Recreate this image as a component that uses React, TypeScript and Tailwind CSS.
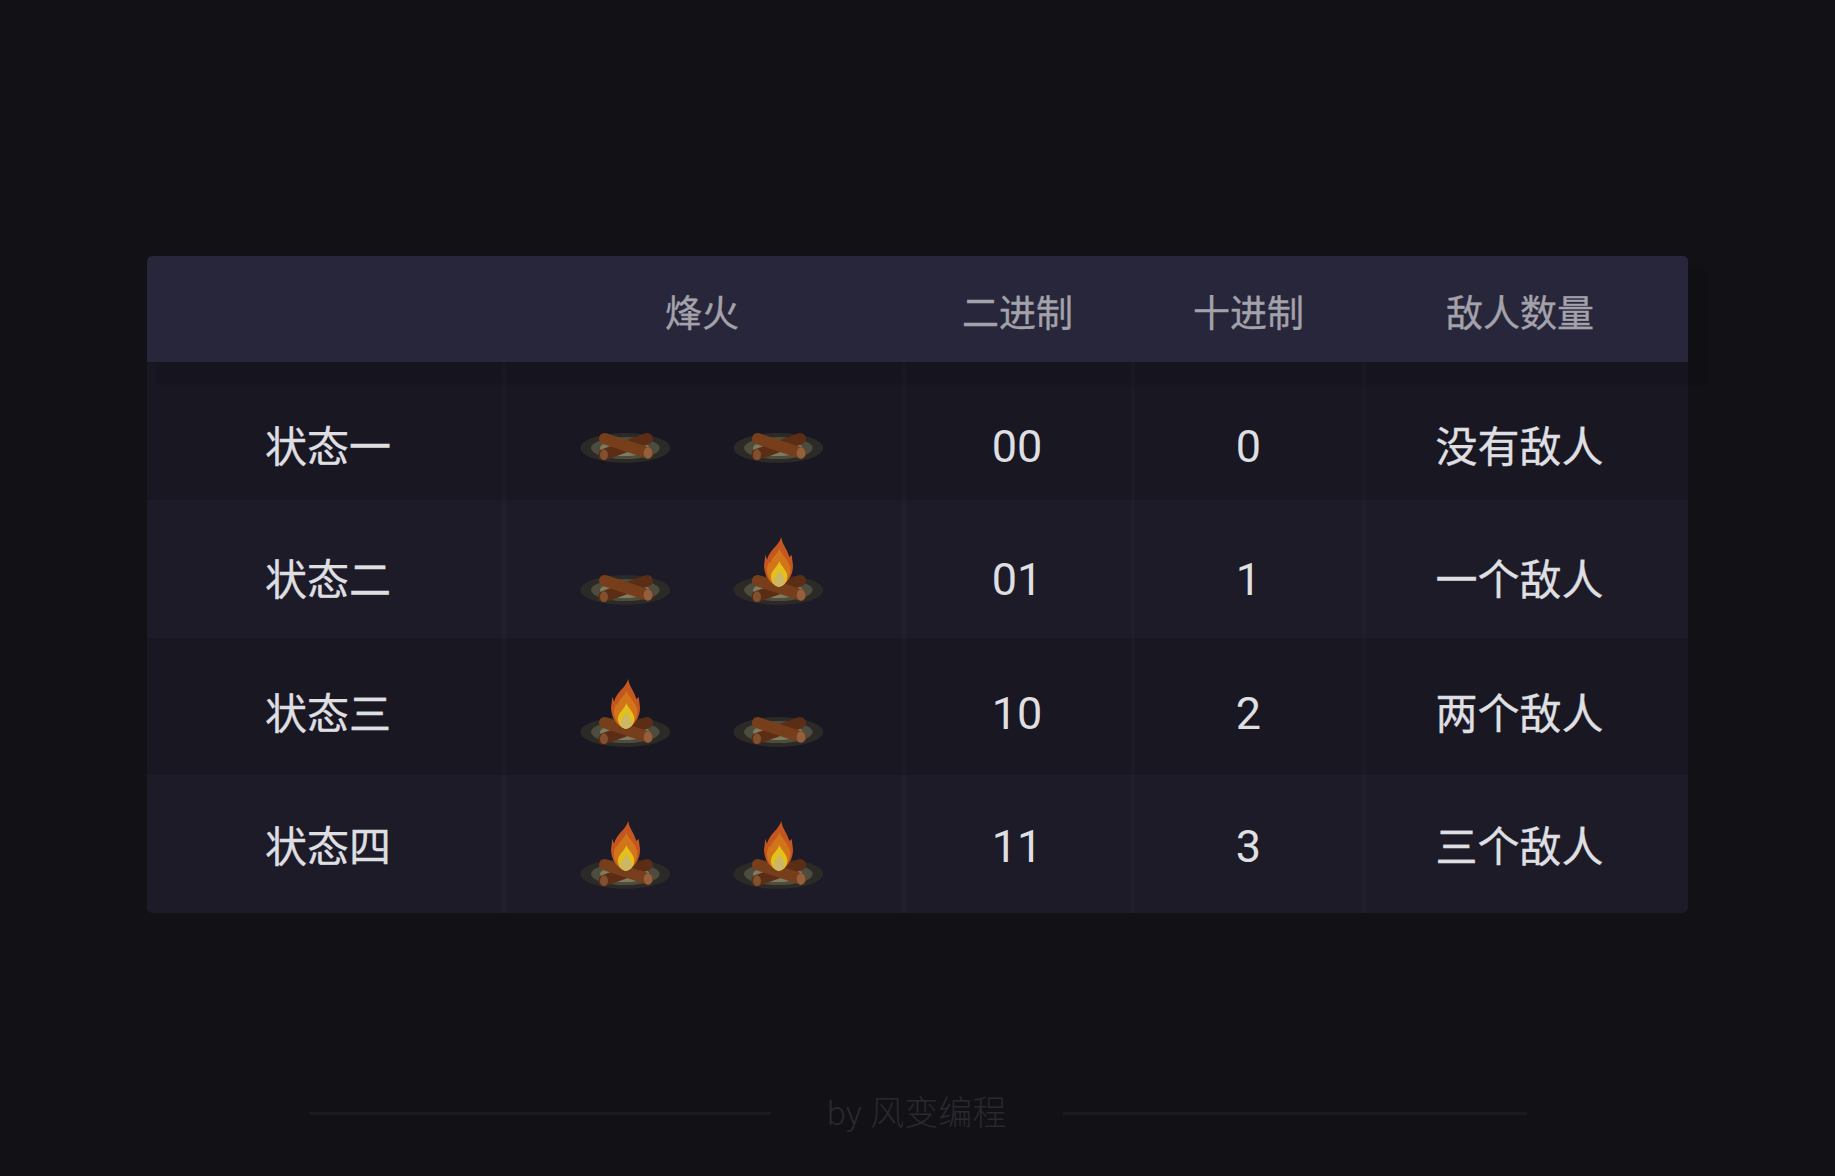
const FONT = "font-['Roboto','Noto_Sans_CJK_SC',sans-serif]";

function Campfire({ lit }: { lit: boolean }) {
  return (
    <svg viewBox="60 175 272 210" width="90.67" height="70" className="block shrink-0">
      <ellipse cx="196" cy="337" rx="135" ry="45" fill="#2b2a27" />
      <ellipse cx="196" cy="337" rx="103" ry="33" fill="#4e4c3e" />
      <ellipse cx="194" cy="337" rx="74" ry="24" fill="#7f7b5f" />
      <path d="M132 357 L262 309" stroke="#5a2d14" strokeWidth="34" strokeLinecap="round" />
      <ellipse cx="132" cy="357" rx="12" ry="16" fill="#80502f" />
      <path d="M134 309 L263 352" stroke="#773e1c" strokeWidth="34" strokeLinecap="round" />
      <ellipse cx="264" cy="352" rx="13" ry="17" fill="#92603d" />
      {lit && (
        <g>
          <path d="M205 178 C207 200 222 212 229 238 L236 232 L240 262 C241 292 224 318 197 327 C170 320 155 296 153 265 L157 231 L162 246 C170 216 196 206 205 178 Z" fill="#c4561f" />
          <path d="M199 212 C203 228 224 242 232 270 C234 294 220 316 197 327 C174 318 160 296 162 270 L168 252 L172 256 C178 236 194 232 199 212 Z" fill="#d2741a" />
          <path d="M199 250 C203 264 223 278 223 297 C223 314 212 325 197 327 C182 325 174 312 174 297 C174 278 194 268 199 250 Z" fill="#e4c01d" />
          <path d="M199 276 C203 288 216 298 216 309 C216 320 208 327 198 327 C188 327 182 320 182 309 C182 298 195 290 199 276 Z" fill="#cdb765" />
        </g>
      )}
    </svg>
  );
}

const rows = [
  { name: "状态一", a: false, b: false, bin: "00", dec: "0", enemy: "没有敌人", bg: "bg-[#181722]", h: "h-[138px]", tp: "pt-[56px]", dp: "pt-[55px]", ip: "pt-[32px]" },
  { name: "状态二", a: false, b: true, bin: "01", dec: "1", enemy: "一个敌人", bg: "bg-[#1c1b27]", h: "h-[138px]", tp: "pt-[51px]", dp: "pt-[50px]", ip: "pt-[36px]" },
  { name: "状态三", a: true, b: false, bin: "10", dec: "2", enemy: "两个敌人", bg: "bg-[#181722]", h: "h-[137px]", tp: "pt-[47px]", dp: "pt-[46px]", ip: "pt-[40px]" },
  { name: "状态四", a: true, b: true, bin: "11", dec: "3", enemy: "三个敌人", bg: "bg-[#1c1b27] rounded-b-[5px]", h: "h-[138px]", tp: "pt-[43px]", dp: "pt-[42px]", ip: "pt-[45px]" },
];

const GRID = "grid grid-cols-[355px_400px_229px_231px_326px]";
const SEP = "border-l-[4px] border-white/[0.015]";
const HEAVY = "[-webkit-text-stroke:0.35px_currentColor]";

export default function App() {
  return (
    <div className={`min-h-[1176px] w-[1835px] bg-[#111116] pt-[256px] ${FONT}`}>
      <div className="ml-[147px] w-[1541px]">
        <div className={`${GRID} ${HEAVY} relative z-10 h-[106px] rounded-t-[5px] bg-[#28263b] pt-[12px] text-[37px] leading-[60px] text-[#a3a2aa] shadow-[15px_18px_3px_5px_rgba(0,0,0,0.07)]`}>
          <div />
          <div className="flex items-center justify-center">烽火</div>
          <div className="flex items-center justify-center pl-[2px]">二进制</div>
          <div className="flex items-center justify-center pl-[4px]">十进制</div>
          <div className="flex items-center justify-center pr-[10px]">敌人数量</div>
        </div>
        {rows.map((r) => (
          <div key={r.name} className={`${GRID} ${r.h} ${r.bg} text-[42px] leading-[60px] text-[#dfdfe2]`}>
            <div className={`flex justify-center pl-[7px] ${HEAVY} ${r.tp}`}>{r.name}</div>
            <div className={`flex justify-center gap-[62.3px] pr-[4px] ${SEP} ${r.ip}`}>
              <Campfire lit={r.a} />
              <Campfire lit={r.b} />
            </div>
            <div className={`flex justify-center pr-[3px] text-[45px] ${SEP} ${r.dp}`}>{r.bin}</div>
            <div className={`flex justify-center text-[45px] ${SEP} ${r.dp}`}>{r.dec}</div>
            <div className={`flex justify-center pr-[15px] ${HEAVY} ${SEP} ${r.tp}`}>{r.enemy}</div>
          </div>
        ))}
      </div>
      <div className="mt-[175px] flex items-center pl-[309px]">
        <div className="h-[3px] w-[462px] bg-[#1a1a1f]" />
        <div className="ml-[56px] w-[236px] whitespace-nowrap text-[34px] font-light leading-[50px] text-[#29292f]">by 风变编程</div>
        <div className="h-[3px] w-[464px] bg-[#1a1a1f]" />
      </div>
    </div>
  );
}
